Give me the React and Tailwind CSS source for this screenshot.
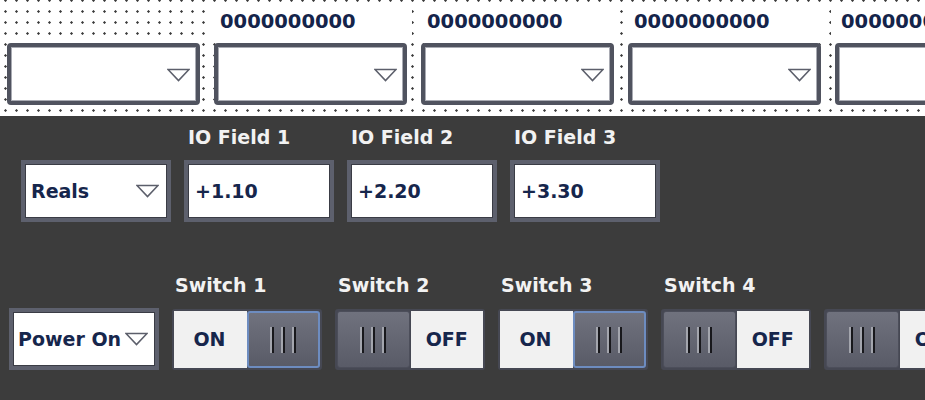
import React from "react";

const font = "font-['DejaVu_Sans',_'Liberation_Sans',_sans-serif] font-bold";

function Arrow() {
  return (
    <svg width="23" height="14" viewBox="0 0 23 14" className="shrink-0">
      <polygon points="1,1.5 22,1.5 11.5,12.5" fill="none" stroke="#5c5f6b" strokeWidth="1.6" strokeLinejoin="miter" />
    </svg>
  );
}

function TopDropdown() {
  return (
    <div className="h-[62px] w-[193px] rounded-[4px] border-[4px] border-[#50535f] bg-white shadow-[inset_0_0_0_1px_#a9abb3] flex items-center justify-end pr-[6px] pt-[2px]">
      <Arrow />
    </div>
  );
}

function TopColumn({ label }) {
  return (
    <div className="w-[193px] shrink-0 flex flex-col">
      {label ? (
        <div className="h-[37px] w-[202px] -ml-[4px] pl-[10px] pt-[6px] bg-white text-[19.5px] leading-[20px] text-[#14244a] whitespace-nowrap">
          {label}
        </div>
      ) : (
        <div className="h-[37px]" />
      )}
      <TopDropdown />
    </div>
  );
}

function DarkBox({ children, className = "" }) {
  return (
    <div className={"h-[62px] w-[150px] shrink-0 border-[4px] border-[#5d606d] bg-white shadow-[inset_0_0_0_1px_#3a3c45] flex items-center text-[19px] text-[#16264c] " + className}>
      {children}
    </div>
  );
}

function Field({ label, value }) {
  return (
    <div className="flex flex-col">
      <div className="mb-[12px] pl-[4px] text-[19px] leading-[21px] text-[#f2f2f2] whitespace-nowrap">{label}</div>
      <DarkBox className="pl-[7px]">{value}</DarkBox>
    </div>
  );
}

function Knob({ focused }) {
  return (
    <div
      className={
        "h-full w-[74px] flex items-center justify-center gap-[7px] rounded-[3px] bg-gradient-to-b from-[#70727e] to-[#595b67] " +
        (focused ? "border-[2px] border-[#6d8cc0]" : "border border-[#4c4e5a]")
      }
    >
      {[0, 1, 2].map((i) => (
        <div key={i} className="h-[26px] w-[4px] flex">
          <div className="w-[2px] bg-[#a3a5ad]" />
          <div className="w-[2px] bg-[#18181c]" />
        </div>
      ))}
    </div>
  );
}

function Switch({ label, on }) {
  return (
    <div className="flex flex-col shrink-0">
      <div className="min-h-[21px] mb-[13px] pl-[3px] text-[19px] leading-[21px] text-[#f2f2f2] whitespace-nowrap">{label}</div>
      <div className="h-[61px] w-[150px] rounded-[3px] border-[2px] border-[#464853] bg-[#464853] flex">
        {on ? (
          <>
            <div className="h-full w-[74px] bg-[#f1f1f1] flex items-center justify-center pr-[2px] text-[19px] text-[#16264c]">ON</div>
            <Knob focused />
          </>
        ) : (
          <>
            <Knob />
            <div className="h-full w-[74px] ml-[1px] bg-[#f1f1f1] flex items-center justify-center text-[19px] text-[#16264c]">OFF</div>
          </>
        )}
      </div>
    </div>
  );
}

export default function App() {
  return (
    <div className={"w-[925px] h-[400px] overflow-hidden bg-[#3c3c3c] " + font}>
      {/* design-time canvas with grid dots */}
      <div className="h-[116px] bg-white bg-[radial-gradient(circle,#3a3a3a_0.9px,transparent_1.5px)] bg-[length:11px_11px] bg-[position:0px_-5px] pt-[6px] pl-[7px] flex gap-[14px] overflow-hidden">
        <TopColumn />
        <TopColumn label="0000000000" />
        <TopColumn label="0000000000" />
        <TopColumn label="0000000000" />
        <TopColumn label="0000000000" />
      </div>

      {/* IO fields */}
      <div className="pt-[11px] pl-[21px] flex items-end gap-[13px]">
        <DarkBox className="pl-[6px] pr-[8px] justify-between">
          <span>Reals</span>
          <Arrow />
        </DarkBox>
        <Field label="IO Field 1" value="+1.10" />
        <Field label="IO Field 2" value="+2.20" />
        <Field label="IO Field 3" value="+3.30" />
      </div>

      {/* Switches */}
      <div className="mt-[53px] pl-[9px] flex items-end gap-[13px]">
        <DarkBox className="pl-[5px] pr-[7px] justify-between whitespace-nowrap">
          <span>Power On</span>
          <Arrow />
        </DarkBox>
        <Switch label="Switch 1" on />
        <Switch label="Switch 2" />
        <Switch label="Switch 3" on />
        <Switch label="Switch 4" />
        <Switch label="" />
      </div>
    </div>
  );
}
